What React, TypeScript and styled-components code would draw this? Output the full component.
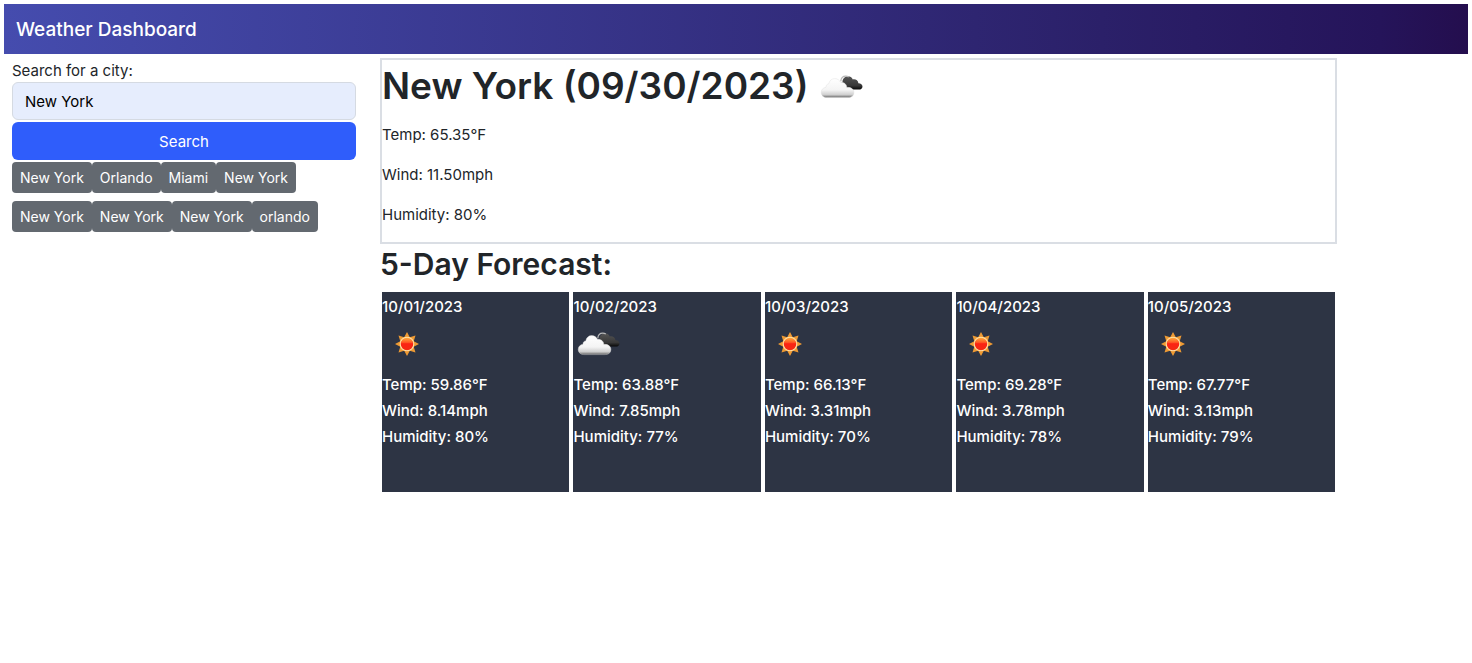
import React, { useId, useState } from "react";
import styled, { createGlobalStyle } from "styled-components";

const GlobalStyle = createGlobalStyle`
  *, *::before, *::after { box-sizing: border-box; }
  body {
    margin: 0;
    background: #fff;
    color: #212529;
    font-family: Inter, "Liberation Sans", sans-serif;
    font-size: 15px;
    line-height: 24px;
  }
  h1, h2, h3, p { margin: 0; }
  button, input { font: inherit; }
`;

const Header = styled.header`
  margin: 4px;
  padding: 11px 12px 9px;
  background: linear-gradient(to right, #454cae, #2b2069 75%, #25145a 94%, #240e4e);
  color: #fff;
`;

const Brand = styled.h3`
  font-size: 19px;
  font-weight: 500;
  line-height: 30px;
`;

const Columns = styled.div`
  display: flex;
  align-items: flex-start;
`;

const Sidebar = styled.aside`
  flex: 0 0 25%;
  padding: 0 12px;
`;

const Main = styled.main`
  flex: 0 0 calc(100% * 2 / 3);
  min-width: 0;
  padding: 0 12px;
`;

const SearchForm = styled.form`
  display: grid;
  row-gap: 2px;
`;

const Field = styled.div`
  display: grid;
`;

const FieldLabel = styled.label`
  padding-top: 2px;
  line-height: 22px;
`;

const CityInput = styled.input`
  width: 100%;
  height: 38px;
  padding: 6px 12px;
  border: 1px solid #d5dae2;
  border-radius: 6px;
  background: #e6edfd;
  color: #000;
`;

const SearchButton = styled.button`
  height: 38px;
  padding: 2px 12px 0;
  border: 0;
  border-radius: 6px;
  background: #2f5dfb;
  color: #fff;
`;

const History = styled.div`
  display: flex;
  flex-direction: column;
  gap: 8px;
  margin-top: 2px;
`;

const HistoryRow = styled.div`
  display: flex;
`;

const HistoryButton = styled.button`
  height: 31px;
  padding: 0 8px;
  border: 0;
  border-radius: 4px;
  background: #636970;
  color: #fff;
  font-size: 14px;
`;

const Current = styled.section`
  display: flex;
  flex-direction: column;
  gap: 16px;
  padding-bottom: 15px;
  border: 2px solid #dadee4;
`;

const City = styled.h1`
  display: flex;
  align-items: flex-start;
  gap: 8px;
  height: 47px;
  padding-top: 4px;
  font-size: 37px;
  font-weight: 600;
  line-height: 44px;
`;

const ForecastTitle = styled.h2`
  margin-bottom: 8px;
  font-size: 30px;
  font-weight: 600;
  line-height: 40px;
`;

const Days = styled.div`
  display: grid;
  grid-template-columns: repeat(5, 1fr);
  gap: 4px;
  padding: 0 2px;
`;

const Day = styled.article`
  display: flex;
  flex-direction: column;
  gap: 2px;
  min-height: 200px;
  padding-top: 3px;
  background: #2d3444;
  color: #fff;
  font-weight: 500;
`;

const Icon = styled.svg`
  display: block;
  flex: none;
  width: 50px;
  height: 50px;
`;

type Sky = "clear" | "clouds";

function WeatherIcon({ sky }: { sky: Sky }) {
  const id = useId();
  if (sky === "clear") {
    return (
      <Icon viewBox="0 1 50 50" role="img" aria-label="clear sky">
        <defs>
          <linearGradient id={id} x1="0" y1="0" x2="0" y2="1">
            <stop offset="0" stopColor="#ffb43a" />
            <stop offset=".38" stopColor="#ff5a25" />
            <stop offset=".48" stopColor="#fb2314" />
            <stop offset="1" stopColor="#f32a12" />
          </linearGradient>
        </defs>
        <path
          fill="#ee9a33"
          d="M25 12l2.8 5.3 5.7-1.8-1.8 5.7L37 24l-5.3 2.8 1.8 5.7-5.7-1.8L25 36l-2.8-5.3-5.7 1.8 1.8-5.7L13 24l5.3-2.8-1.8-5.7 5.7 1.8z"
        />
        <circle cx="25" cy="24" r="6.8" fill={`url(#${id})`} stroke="#ffe1a8" strokeWidth="1.1" />
      </Icon>
    );
  }
  return (
    <Icon viewBox="-1 1 50 50" role="img" aria-label="broken clouds">
      <defs>
        <linearGradient id={`${id}d`} x1="0" y1="0" x2="0" y2="1">
          <stop offset="0" stopColor="#555" />
          <stop offset=".7" stopColor="#383838" />
          <stop offset="1" stopColor="#080808" />
        </linearGradient>
        <linearGradient id={`${id}w`} x1="0" y1="0" x2="0" y2="1">
          <stop offset="0" stopColor="#fff" />
          <stop offset=".6" stopColor="#f4f4f4" />
          <stop offset=".85" stopColor="#cfcfcf" />
          <stop offset="1" stopColor="#666" />
        </linearGradient>
      </defs>
      <path
        fill={`url(#${id}d)`}
        d="M25 26.5a4 4 0 0 1 .5-7.4c0-3.4 2.4-5.8 5.4-5.8 2.2 0 4 1.2 4.9 3.1 2.8-.6 5.3 1.1 5.6 3.8 2.5.1 4.1 1.4 4.1 3.2 0 1.9-1.5 3.1-3.7 3.1z"
      />
      <path
        fill="none"
        stroke="#b8b8b8"
        strokeWidth="1.2"
        d="M23.8 18.3c.2-3 2.2-5.2 5-5.2 1.3 0 2.2.4 3 1"
      />
      <path
        fill={`url(#${id}w)`}
        stroke="#dcdcdc"
        strokeWidth=".4"
        d="M9.8 34.6c-3.2 0-5.6-2.1-5.6-5.1 0-2.9 2-4.9 4.8-5.2-.2-1.9 1-3.3 2.7-3.4.7-3.3 3-5.3 6-5.3 2.6 0 4.800 1.400 5.800 3.700 3.400-.4 6.100 1.800 6.400 5.100 4.300-.3 7 1.800 7 5.100 0 3.200-2.300 5.100-5.700 5.100z"
      />
    </Icon>
  );
}

const history = [
  ["New York", "Orlando", "Miami", "New York"],
  ["New York", "New York", "New York", "orlando"],
];

const forecast: { date: string; sky: Sky; temp: string; wind: string; humidity: number }[] = [
  { date: "10/01/2023", sky: "clear", temp: "59.86", wind: "8.14", humidity: 80 },
  { date: "10/02/2023", sky: "clouds", temp: "63.88", wind: "7.85", humidity: 77 },
  { date: "10/03/2023", sky: "clear", temp: "66.13", wind: "3.31", humidity: 70 },
  { date: "10/04/2023", sky: "clear", temp: "69.28", wind: "3.78", humidity: 78 },
  { date: "10/05/2023", sky: "clear", temp: "67.77", wind: "3.13", humidity: 79 },
];

export default function App() {
  const [city, setCity] = useState("New York");
  return (
    <>
      <GlobalStyle />
      <Header>
        <Brand>Weather Dashboard</Brand>
      </Header>
      <Columns>
        <Sidebar>
          <SearchForm onSubmit={(e) => e.preventDefault()}>
            <Field>
              <FieldLabel htmlFor="city">Search for a city:</FieldLabel>
              <CityInput id="city" type="text" value={city} onChange={(e) => setCity(e.target.value)} />
            </Field>
            <SearchButton type="submit">Search</SearchButton>
          </SearchForm>
          <History>
            {history.map((row, r) => (
              <HistoryRow key={r}>
                {row.map((name, i) => (
                  <HistoryButton key={i} type="button" onClick={() => setCity(name)}>
                    {name}
                  </HistoryButton>
                ))}
              </HistoryRow>
            ))}
          </History>
        </Sidebar>
        <Main>
          <Current>
            <City>
              New York (09/30/2023)
              <WeatherIcon sky="clouds" />
            </City>
            <p>Temp: 65.35°F</p>
            <p>Wind: 11.50mph</p>
            <p>Humidity: 80%</p>
          </Current>
          <ForecastTitle>5-Day Forecast:</ForecastTitle>
          <Days>
            {forecast.map((day) => (
              <Day key={day.date}>
                <p>{day.date}</p>
                <WeatherIcon sky={day.sky} />
                <p>Temp: {day.temp}°F</p>
                <p>Wind: {day.wind}mph</p>
                <p>Humidity: {day.humidity}%</p>
              </Day>
            ))}
          </Days>
        </Main>
      </Columns>
    </>
  );
}
